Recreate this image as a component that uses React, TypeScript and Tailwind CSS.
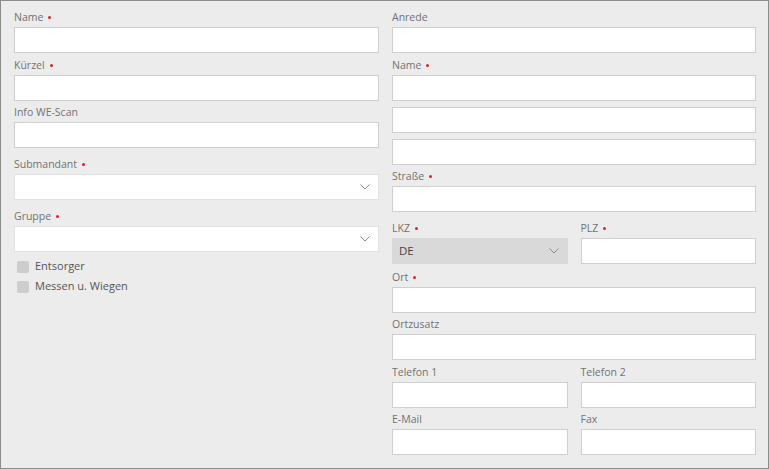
import React from 'react';

const font = { fontFamily: '"Open Sans", "Noto Sans", sans-serif' };

const Chevron = () => (
  <svg width="10" height="6" viewBox="0 0 10 6" fill="none" className="shrink-0">
    <path d="M0.5 0.5 L5 5 L9.5 0.5" stroke="#8a8a8a" strokeWidth="1" />
  </svg>
);

const Label = ({ text, required }: { text: string; required?: boolean }) => (
  <div className="h-[21.5px] pt-[4.5px] leading-[14px] text-[10.5px] text-[#727272] flex items-start">
    <span>{text}</span>
    {required && <span className="ml-[5px] mt-[6px] w-[3px] h-[3px] rounded-full bg-[#e0202a]" />}
  </div>
);

const TextInput = () => (
  <input className="block w-full h-[26px] bg-white border border-[#cfcfcf] outline-none px-[6px] text-[12px]" />
);

const Select = ({ value, disabled }: { value?: string; disabled?: boolean }) => (
  <div
    className={`h-[26px] w-full flex items-center justify-between pl-[6px] pr-[8px] text-[11.5px] text-[#444] ${
      disabled ? 'bg-[#d9d9d9] border border-[#d9d9d9]' : 'bg-white border border-[#e2e2e2]'
    }`}
  >
    <span>{value}</span>
    <Chevron />
  </div>
);

const Field = ({ label, required, children }: { label: string; required?: boolean; children?: React.ReactNode }) => (
  <div>
    <Label text={label} required={required} />
    {children ?? <TextInput />}
  </div>
);

const Check = ({ label }: { label: string }) => (
  <label className="flex items-center h-[20px] pl-[3px] text-[11px] text-[#555]">
    <span className="w-[12px] h-[12px] rounded-[2px] bg-[#cdcdcd] mr-[6px]" />
    {label}
  </label>
);

export default function App() {
  return (
    <div style={font} className="w-[769px] h-[469px] border border-[#8c8c8c] bg-[#ececec] pl-[13px] pt-[4.5px]">
      <div className="grid grid-cols-[365px_364px] gap-x-[13px]">
        <div className="flex flex-col">
          <Field label="Name" required />
          <Field label="Kürzel" required />
          <Field label="Info WE-Scan" />
          <div className="mt-[4.5px]">
            <Field label="Submandant" required>
              <Select />
            </Field>
          </div>
          <div className="mt-[4px]">
            <Field label="Gruppe" required>
              <Select />
            </Field>
          </div>
          <div className="mt-[5px] flex flex-col">
            <Check label="Entsorger" />
            <Check label="Messen u. Wiegen" />
          </div>
        </div>
        <div className="flex flex-col">
          <Field label="Anrede" />
          <Field label="Name" required>
            <div className="flex flex-col gap-[6px]">
              <TextInput />
              <TextInput />
              <TextInput />
            </div>
          </Field>
          <Field label="Straße" required />
          <div className="mt-[4.5px] mb-[1px] grid grid-cols-2 gap-x-[13px]">
            <Field label="LKZ" required>
              <Select value="DE" disabled />
            </Field>
            <Field label="PLZ" required />
          </div>
          <Field label="Ort" required />
          <Field label="Ortzusatz" />
          <div className="grid grid-cols-2 gap-x-[13px]">
            <Field label="Telefon 1" />
            <Field label="Telefon 2" />
          </div>
          <div className="grid grid-cols-2 gap-x-[13px]">
            <Field label="E-Mail" />
            <Field label="Fax" />
          </div>
        </div>
      </div>
    </div>
  );
}
